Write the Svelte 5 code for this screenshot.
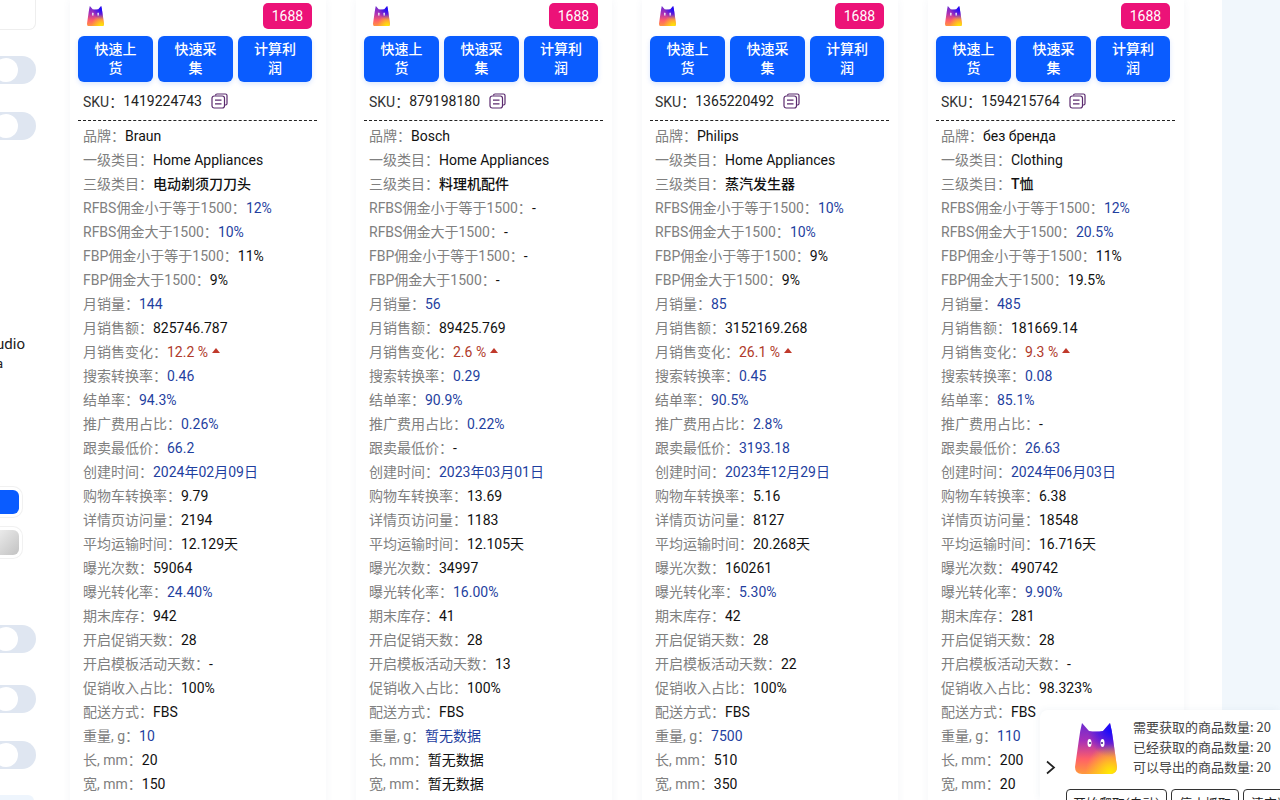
<script>
  const labels = [
    '品牌', '一级类目', '三级类目', 'RFBS佣金小于等于1500', 'RFBS佣金大于1500', 'FBP佣金小于等于1500',
    'FBP佣金大于1500', '月销量', '月销售额', '月销售变化', '搜索转换率', '结单率', '推广费用占比',
    '跟卖最低价', '创建时间', '购物车转换率', '详情页访问量', '平均运输时间', '曝光次数', '曝光转化率',
    '期末库存', '开启促销天数', '开启模板活动天数', '促销收入占比', '配送方式', '重量, g', '长, mm', '宽, mm'
  ];

  // rows whose value is shown in blue
  const blue = [3, 4, 7, 10, 11, 12, 13, 14, 19, 25];

  const products = [
    { sku: '1419224743', values: ['Braun', 'Home Appliances', '电动剃须刀刀头', '12%', '10%', '11%', '9%', '144', '825746.787', '12.2 %', '0.46', '94.3%', '0.26%', '66.2', '2024年02月09日', '9.79', '2194', '12.129天', '59064', '24.40%', '942', '28', '-', '100%', 'FBS', '10', '20', '150'] },
    { sku: '879198180', values: ['Bosch', 'Home Appliances', '料理机配件', '-', '-', '-', '-', '56', '89425.769', '2.6 %', '0.29', '90.9%', '0.22%', '-', '2023年03月01日', '13.69', '1183', '12.105天', '34997', '16.00%', '41', '28', '13', '100%', 'FBS', '暂无数据', '暂无数据', '暂无数据'] },
    { sku: '1365220492', values: ['Philips', 'Home Appliances', '蒸汽发生器', '10%', '10%', '9%', '9%', '85', '3152169.268', '26.1 %', '0.45', '90.5%', '2.8%', '3193.18', '2023年12月29日', '5.16', '8127', '20.268天', '160261', '5.30%', '42', '28', '22', '100%', 'FBS', '7500', '510', '350'] },
    { sku: '1594215764', values: ['без бренда', 'Clothing', 'T恤', '12%', '20.5%', '11%', '19.5%', '485', '181669.14', '9.3 %', '0.08', '85.1%', '-', '26.63', '2024年06月03日', '6.38', '18548', '16.716天', '490742', '9.90%', '281', '28', '-', '98.323%', 'FBS', '110', '200', '20'] }
  ];

  function tone(i, value) {
    if (i === 9) return 'red';
    if (value === '-') return '';
    return blue.includes(i) ? 'blue' : '';
  }
</script>

{#snippet cat(size, id)}
  <svg class="cat" width={size} height={size * 51 / 42} viewBox="0 0 42 51">
    <defs>
      <linearGradient id="{id}a" x1="0" y1="0" x2="0" y2="1">
        <stop offset="0" stop-color="#6a2bd0" />
        <stop offset="0.35" stop-color="#a82fb8" />
        <stop offset="0.7" stop-color="#ff5f68" />
        <stop offset="1" stop-color="#ff9a3c" />
      </linearGradient>
      <radialGradient id="{id}b" cx="0.85" cy="0.12" r="0.55">
        <stop offset="0" stop-color="#1208ff" />
        <stop offset="1" stop-color="#1208ff" stop-opacity="0" />
      </radialGradient>
      <radialGradient id="{id}c" cx="0.85" cy="1" r="0.6">
        <stop offset="0" stop-color="#ffee00" />
        <stop offset="1" stop-color="#ffee00" stop-opacity="0" />
      </radialGradient>
    </defs>
    <path fill="url(#{id}a)" d="M7 0 L14 8 Q21 9 28 8 L35 0 Q37 8 38 16 L42 44 Q42 51 35 51 L7 51 Q0 51 0 44 L4 16 Q5 8 7 0Z" />
    <path fill="url(#{id}b)" d="M7 0 L14 8 Q21 9 28 8 L35 0 Q37 8 38 16 L42 44 Q42 51 35 51 L7 51 Q0 51 0 44 L4 16 Q5 8 7 0Z" />
    <path fill="url(#{id}c)" d="M7 0 L14 8 Q21 9 28 8 L35 0 Q37 8 38 16 L42 44 Q42 51 35 51 L7 51 Q0 51 0 44 L4 16 Q5 8 7 0Z" />
    <ellipse cx="14.5" cy="20" rx="2" ry="4" fill="#fff" />
    <ellipse cx="27.5" cy="20" rx="2" ry="4" fill="#fff" />
    <circle cx="15" cy="20" r="1" fill="#3a1a80" />
    <circle cx="27" cy="20" r="1" fill="#3a1a80" />
  </svg>
{/snippet}

<div class="page">
  <aside class="side">
    <div class="field"></div>
    <div class="toggle first"></div>
    <div class="toggle second"></div>
    <div class="studio">Audio</div>
    <div class="studio-sub">Media</div>
    <div class="swatch primary"></div>
    <div class="swatch grey"></div>
    <div class="toggle third"></div>
    <div class="toggle fourth"></div>
    <div class="toggle fifth"></div>
    <div class="pale"></div>
  </aside>

  <main class="list">
    {#each products as item, p}
      <section class="card">
        <div class="head">
          {@render cat(17, 'c' + p)}
          <span class="badge">1688</span>
        </div>
        <div class="actions">
          <button>快速上货</button>
          <button>快速采集</button>
          <button>计算利润</button>
        </div>
        <div class="sku">
          <span class="sku-label">SKU：</span><span>{item.sku}</span>
          <svg class="copy" width="17" height="16" viewBox="0 0 17 16" fill="none" stroke="#5b2a6e" stroke-width="1.2">
            <path d="M4.5 2.6 V2.4 Q4.5 1 6 1 H14.4 Q16 1 16 2.6 V10.5 Q16 12 14.5 12 H13.6" />
            <rect x="1" y="3" width="12.5" height="12" rx="2.2" />
            <path d="M4 7.2 H10.5 M4 10.8 H10.5" />
          </svg>
        </div>
        <div class="rows">
          {#each labels as label, i}
            <div class="row">
              <span class="label">{label}：</span><span class="value {tone(i, item.values[i])}" class:strong={i === 2}>{item.values[i]}</span>{#if i === 9}<span class="up"></span>{/if}
            </div>
          {/each}
        </div>
      </section>
    {/each}
  </main>

  <div class="rail"></div>

  <div class="float">
    <svg class="chevron" width="11" height="15" viewBox="0 0 11 15" fill="none" stroke="#222" stroke-width="1.7">
      <path d="M2 1.5 L9 7.5 L2 13.5" />
    </svg>
    {@render cat(42, 'big')}
    <div class="counts">
      <div>需要获取的商品数量: 20</div>
      <div>已经获取的商品数量: 20</div>
      <div>可以导出的商品数量: 20</div>
    </div>
    <div class="controls">
      <span class="control wide">开始爬取(自动)</span>
      <span class="control">停止抓取</span>
      <span class="control">清空数据</span>
    </div>
  </div>
</div>

<style>
  :global(body) {
    background: #fff;
    font-family: Roboto, "Noto Sans CJK SC", sans-serif;
  }

  .page {
    position: relative;
    display: flex;
    width: 1280px;
    height: 800px;
    overflow: hidden;
  }

  .side {
    flex: 0 0 70px;
    display: flex;
    flex-direction: column;
    overflow: hidden;
  }

  .field {
    flex: none;
    width: 36px;
    height: 30px;
    border: 1px solid #eeeeee;
    border-top: 0;
    border-left: 0;
    border-radius: 0 0 7px 0;
    box-sizing: border-box;
  }

  .toggle {
    flex: none;
    position: relative;
    width: 36px;
    height: 28px;
    background: #dfe6f1;
    border-radius: 0 14px 14px 0;
  }

  .toggle::after {
    content: '';
    position: absolute;
    right: 18px;
    top: 2px;
    width: 24px;
    height: 24px;
    background: #fff;
    border-radius: 50%;
  }

  .first { margin-top: 26px; }
  .second { margin-top: 28px; }
  .third { margin-top: 70px; }
  .fourth { margin-top: 32px; }
  .fifth { margin-top: 28px; }

  .studio {
    flex: none;
    width: 25px;
    margin-top: 194px;
    height: 20px;
    line-height: 20px;
    font-size: 15px;
    color: #222;
    display: flex;
    justify-content: flex-end;
    white-space: nowrap;
  }

  .studio-sub {
    flex: none;
    width: 3px;
    height: 20px;
    line-height: 20px;
    font-size: 13px;
    color: #222;
    display: flex;
    justify-content: flex-end;
    white-space: nowrap;
  }

  .swatch {
    flex: none;
    width: 19px;
    height: 24px;
    border-radius: 0 6px 6px 0;
    box-shadow: 0 0 0 3px #fff, 0 0 0 4px #f1f1f1;
  }

  .primary {
    margin-top: 116px;
    background: #0a5cff;
  }

  .grey {
    margin-top: 16px;
    height: 25px;
    background: linear-gradient(135deg, #eaeaea, #c2c2c2);
  }

  .pale {
    flex: none;
    width: 34px;
    height: 20px;
    margin-top: 26px;
    background: #eef5fd;
    border-radius: 0 6px 0 0;
  }

  .list {
    flex: none;
    display: flex;
    gap: 30px;
  }

  .card {
    flex: none;
    width: 256px;
    height: 840px;
    padding: 3px 0 0 8px;
    box-sizing: border-box;
    background: #fff;
    box-shadow: 0 0 8px rgba(60, 90, 140, 0.06);
  }

  .head {
    display: flex;
    align-items: center;
    justify-content: space-between;
    width: 234px;
    height: 26px;
  }

  .head .cat {
    margin-left: 9px;
  }

  .badge {
    width: 49px;
    height: 26px;
    line-height: 26px;
    text-align: center;
    font-size: 14px;
    color: #fff;
    background: #ec1278;
    border-radius: 5px;
  }

  .actions {
    display: grid;
    grid-template-columns: 75px 75px 74px;
    gap: 5px;
    width: 234px;
    margin-top: 7px;
  }

  .actions button {
    height: 46px;
    padding: 0 12px;
    border: 0;
    border-radius: 6px;
    background: #0a5cff;
    color: #fff;
    font: 500 14px/19px Roboto, "Noto Sans CJK SC", sans-serif;
    box-shadow: 0 2px 5px rgba(10, 92, 255, 0.15);
  }

  .sku {
    display: flex;
    align-items: center;
    width: 239px;
    height: 39px;
    padding-left: 5px;
    box-sizing: border-box;
    font-size: 14px;
    color: #222;
    border-bottom: 1px dashed #222;
  }

  .sku-label {
    color: #333;
  }

  .copy {
    margin-left: 9px;
  }

  .rows {
    padding: 3px 0 0 5px;
  }

  .row {
    height: 24px;
    line-height: 24px;
    font-size: 14px;
    white-space: nowrap;
  }

  .label {
    color: #808080;
  }

  .value {
    color: #111;
  }

  .strong {
    font-weight: 500;
  }

  .blue {
    color: #1f3f9f;
  }

  .red {
    color: #b03a2a;
  }

  .up {
    display: inline-block;
    width: 0;
    height: 0;
    margin-left: 4px;
    vertical-align: 4px;
    border-left: 4.5px solid transparent;
    border-right: 4.5px solid transparent;
    border-bottom: 5px solid #c0392b;
  }

  .rail {
    position: absolute;
    left: 1222px;
    top: 0;
    width: 58px;
    height: 800px;
    background: #f1f7fc;
  }

  .float {
    position: absolute;
    left: 1040px;
    top: 710px;
    width: 240px;
    height: 90px;
    background: #fff;
    border-radius: 8px 0 0 0;
    box-shadow: -2px -1px 6px rgba(60, 90, 140, 0.05);
  }

  .chevron {
    position: absolute;
    left: 5px;
    top: 50px;
  }

  .float .cat {
    position: absolute;
    left: 35px;
    top: 13px;
  }

  .counts {
    position: absolute;
    left: 93px;
    top: 7px;
    font: 13px/20px "Noto Sans CJK SC", sans-serif;
    color: #444;
    white-space: nowrap;
  }

  .controls {
    position: absolute;
    left: 26px;
    top: 79px;
    display: flex;
    gap: 4px;
    white-space: nowrap;
  }

  .control {
    flex: none;
    width: 68px;
    height: 30px;
    line-height: 28px;
    text-align: center;
    box-sizing: border-box;
    border: 1px solid #333;
    border-radius: 4px;
    font-size: 13px;
    color: #222;
  }

  .wide {
    width: 101px;
  }
</style>
